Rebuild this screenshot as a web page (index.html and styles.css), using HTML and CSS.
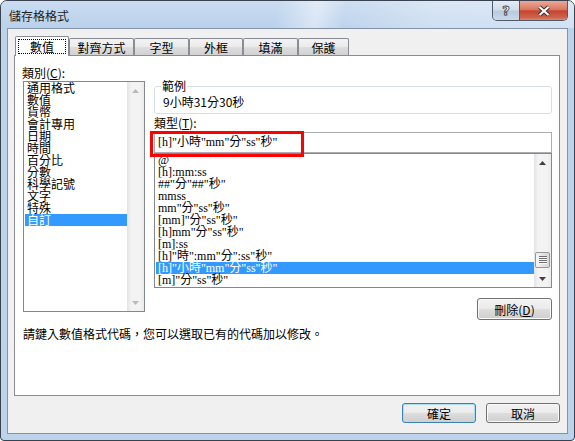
FILE: index.html
```html
<!DOCTYPE html>
<html lang="zh-Hant">
<head>
<meta charset="utf-8">
<title>儲存格格式</title>
<link rel="stylesheet" href="styles.css">
</head>
<body>
<div class="window">
  <div class="titlebar">
    <div class="title">儲存格格式</div>
    <div class="caption">
      <div class="cap-help"><span class="help-glyph">?</span></div>
      <div class="cap-close">
        <svg width="16" height="12" viewBox="0 0 16 12"><path d="M3.5 2 L12.5 10 M12.5 2 L3.5 10" stroke="#3a2b2b" stroke-width="4"/><path d="M3.5 2 L12.5 10 M12.5 2 L3.5 10" stroke="#ffffff" stroke-width="2.2"/></svg>
      </div>
    </div>
  </div>
  <div class="client">
    <div class="tabs">
      <div class="tab active tab-w1"><span class="focus">數值</span></div>
      <div class="tab tab-w2">對齊方式</div>
      <div class="tab tab-w3">字型</div>
      <div class="tab tab-w4">外框</div>
      <div class="tab tab-w5">填滿</div>
      <div class="tab tab-w6">保護</div>
    </div>
    <div class="panel">
      <div class="columns">
        <div class="col-left">
          <div class="label cat-label">類別(<u>C</u>):</div>
          <div class="listbox cat">
            <ul class="items">
              <li>通用格式</li>
              <li>數值</li>
              <li>貨幣</li>
              <li>會計專用</li>
              <li>日期</li>
              <li>時間</li>
              <li>百分比</li>
              <li>分數</li>
              <li>科學記號</li>
              <li>文字</li>
              <li>特殊</li>
              <li class="sel">自訂</li>
            </ul>
            <div class="vscroll">
              <div class="arrow"><svg width="7" height="4" viewBox="0 0 7 4"><path d="M0 4 L3.5 0 L7 4Z" fill="#b9b9b9"/></svg></div>
              <div class="track"></div>
              <div class="arrow"><svg width="7" height="4" viewBox="0 0 7 4"><path d="M0 0 L3.5 4 L7 0Z" fill="#b9b9b9"/></svg></div>
            </div>
          </div>
        </div>
        <div class="col-right">
          <div class="group">
            <div class="legend">範例</div>
            <div class="sample">9小時31分30秒</div>
          </div>
          <div class="label type-label">類型(<u>T</u>):</div>
          <div class="type-wrap">
            <div class="input">[h]"小時"mm"分"ss"秒"</div>
            <div class="mark"></div>
          </div>
          <div class="listbox fmt">
            <ul class="items">
              <li>@</li>
              <li>[h]:mm:ss</li>
              <li>##"分"##"秒"</li>
              <li>mmss</li>
              <li>mm"分"ss"秒"</li>
              <li>[mm]"分"ss"秒"</li>
              <li>[h]mm"分"ss"秒"</li>
              <li>[m]:ss</li>
              <li>[h]"時":mm"分":ss"秒"</li>
              <li class="sel">[h]"小時"mm"分"ss"秒"</li>
              <li>[m]"分"ss"秒"</li>
            </ul>
            <div class="vscroll">
              <div class="arrow"><svg width="7" height="4" viewBox="0 0 7 4"><path d="M0 4 L3.5 0 L7 4Z" fill="#404040"/></svg></div>
              <div class="track"><div class="thumb"><div class="grip"></div></div></div>
              <div class="arrow"><svg width="7" height="4" viewBox="0 0 7 4"><path d="M0 0 L3.5 4 L7 0Z" fill="#404040"/></svg></div>
            </div>
          </div>
          <button class="btn delete">刪除(<u>D</u>)</button>
        </div>
      </div>
      <div class="hint">請鍵入數值格式代碼，您可以選取已有的代碼加以修改。</div>
    </div>
    <div class="footer">
      <button class="btn default">確定</button>
      <button class="btn">取消</button>
    </div>
  </div>
</div>
</body>
</html>
```
FILE: styles.css
```css
* { box-sizing: border-box; }
body {
  margin: 0;
  font-family: "Noto Sans CJK TC", sans-serif;
  font-size: 12px;
  color: #000;
}
.window {
  width: 575px;
  height: 441px;
  border: 1px solid #39424e;
  border-radius: 7px 7px 4px 4px;
  background: #bcd3ec;
  display: flex;
  flex-direction: column;
  overflow: hidden;
}
.titlebar {
  height: 27px;
  flex: none;
  display: flex;
  justify-content: space-between;
  align-items: flex-start;
  background:
    linear-gradient(100deg, rgba(255,255,255,0) 0%, rgba(255,255,255,0) 48%, rgba(255,255,255,.45) 55%, rgba(255,255,255,.05) 60%, rgba(255,255,255,.3) 75%, rgba(255,255,255,.35) 100%),
    linear-gradient(#cadcf1, #bad1eb);
}
.title {
  padding: 8px 0 0 8px;
  line-height: 13px;
  font-size: 12px;
  color: #1e1e1e;
}
.caption {
  display: flex;
  margin-right: 6px;
  border: 1px solid #505b69;
  border-top: none;
  border-radius: 0 0 5px 5px;
  overflow: hidden;
}
.cap-help {
  width: 27px;
  height: 19px;
  border-right: 1px solid #505b69;
  background: linear-gradient(#e4ecf5, #cfdcec 48%, #b9cade 52%, #cad9ea);
  display: flex;
  align-items: center;
  justify-content: center;
}
.help-glyph {
  font-family: "DejaVu Sans", sans-serif;
  font-weight: bold;
  font-size: 13px;
  line-height: 13px;
  color: #fff;
  -webkit-text-stroke: 0.8px #34414f;
}
.cap-close {
  width: 47px;
  height: 19px;
  background: linear-gradient(#eaa898, #d9785f 45%, #c44530 52%, #cf6048 85%, #d98670);
  display: flex;
  align-items: center;
  justify-content: center;
}
.client {
  flex: 1;
  margin: 0 6px 6px;
  background: #f0f0f0;
  border: 1px solid #8394a8;
  padding: 7px 7px 0 6px;
  display: flex;
  flex-direction: column;
}
.tabs {
  display: flex;
  align-items: flex-end;
  height: 19px;
  margin-left: 1px;
  flex: none;
}
.tab {
  height: 17px;
  border: 1px solid #898c95;
  border-bottom: none;
  border-radius: 2px 2px 0 0;
  background: linear-gradient(#f3f3f3, #ebebeb 48%, #dddddd 52%, #d2d2d2);
  display: flex;
  align-items: center;
  justify-content: center;
  line-height: 13px;
}
.tab-w1 { width: 54px; }
.tab-w2 { width: 65px; }
.tab-w3 { width: 55px; }
.tab-w4 { width: 54px; }
.tab-w5 { width: 55px; }
.tab-w6 { width: 51px; }
.tab.active {
  height: 20px;
  margin-bottom: -1px;
  background: #fff;
  position: relative;
  z-index: 1;
}
.focus {
  display: flex;
  align-items: center;
  justify-content: center;
  width: 48px;
  height: 15px;
  border: 1px dotted #000;
}
.panel {
  height: 341px;
  flex: none;
  background: #fff;
  border: 1px solid #898c95;
  padding: 10px 7px 0 8px;
}
.columns {
  display: flex;
  gap: 9px;
}
.col-left { width: 122px; }
.col-right {
  width: 398px;
  display: flex;
  flex-direction: column;
}
.label { line-height: 13px; }
.cat-label {
  margin-left: -1px;
  margin-bottom: 2px;
}
.listbox {
  border: 1px solid #828790;
  display: flex;
  background: #fff;
}
.cat { height: 231px; }
.items {
  list-style: none;
  margin: 0;
  padding: 0 0 0 1px;
  flex: 1;
}
.items li {
  height: 12px;
  line-height: 12px;
  padding-left: 2px;
  white-space: nowrap;
}
.items li.sel {
  background: #3399ff;
  color: #fff;
}
.fmt .items li {
  font-family: "Liberation Serif", "Noto Sans CJK TC", serif;
  font-size: 12px;
}
.vscroll {
  width: 17px;
  flex: none;
  display: flex;
  flex-direction: column;
  background: linear-gradient(to right, #e3e3e3, #f3f3f3 25%, #f3f3f3 75%, #ebebeb);
}
.arrow {
  height: 17px;
  flex: none;
  display: flex;
  align-items: center;
  justify-content: center;
}
.track { flex: 1; }
.thumb {
  margin: 81px 1px 0;
  height: 16px;
  border: 1px solid #979797;
  border-radius: 2px;
  background: linear-gradient(to right, #f6f6f6, #e6e6e6 50%, #d8d8d8);
  display: flex;
  align-items: center;
  justify-content: center;
}
.grip {
  width: 8px;
  height: 8px;
  background: repeating-linear-gradient(#6d6d6d 0 1px, #fbfbfb 1px 2px);
}
.group {
  margin-top: 20px;
  height: 28px;
  border: 1px solid #d5dfe5;
  border-radius: 3px;
  padding-left: 7px;
}
.legend {
  width: max-content;
  margin: -8px 0 0 -1px;
  padding: 0 1px;
  background: #fff;
  line-height: 13px;
}
.sample {
  margin: 3px 0 0 1px;
  line-height: 13px;
}
.type-label { margin-top: 2px; }
.type-wrap {
  position: relative;
  margin-top: 3px;
}
.input {
  height: 21px;
  border: 1px solid #abadb3;
  padding-left: 3px;
  line-height: 19px;
  font-family: "Liberation Serif", "Noto Sans CJK TC", serif;
  white-space: nowrap;
}
.mark {
  position: absolute;
  left: -4px;
  top: -1px;
  width: 154px;
  height: 26px;
  border: 3px solid #ff0000;
  z-index: 2;
}
.fmt { height: 135px; }
.btn {
  font-family: "Noto Sans CJK TC", sans-serif;
  font-size: 12px;
  color: #000;
  padding: 0;
  border: 1px solid #707070;
  border-radius: 3px;
  background: linear-gradient(#f2f2f2, #ebebeb 48%, #dddddd 52%, #cfcfcf);
  box-shadow: inset 0 0 0 1px #fbfbfb;
  line-height: 13px;
}
.delete {
  align-self: flex-end;
  margin-top: 10px;
  width: 75px;
  height: 22px;
}
.hint {
  margin-top: 7px;
  line-height: 13px;
}
.footer {
  display: flex;
  justify-content: flex-end;
  gap: 10px;
  margin-top: 7px;
}
.footer .btn {
  width: 74px;
  height: 20px;
}
.btn.default {
  border-color: #3c7fb1;
  box-shadow: inset 0 0 0 1px #a9dcf5;
}
```
